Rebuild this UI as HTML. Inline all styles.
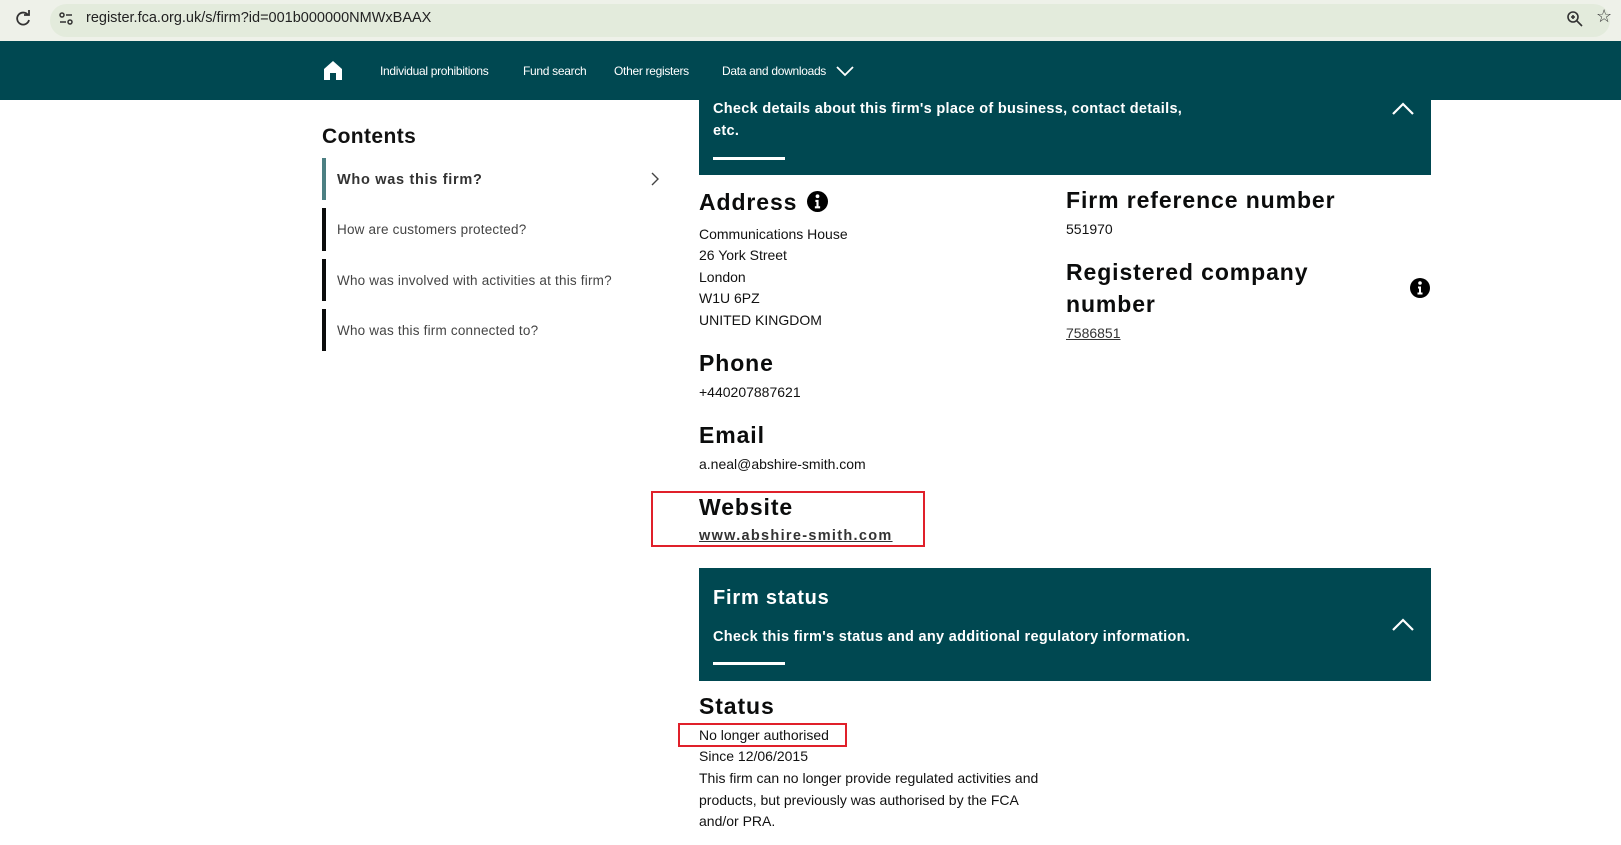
<!DOCTYPE html>
<html><head><meta charset="utf-8"><style>
*{margin:0;padding:0;box-sizing:border-box}
body{width:1621px;height:845px;overflow:hidden;background:#fff;font-family:"Liberation Sans",Arial,sans-serif;color:#111;position:relative}
.a{position:absolute;white-space:nowrap}
.top{position:absolute;left:0;top:0;width:1621px;height:41px;background:#eef1e9}
.url{position:absolute;left:50px;top:4px;width:1560px;height:33px;border-radius:17px;background:#e3ebdc}
.nav{position:absolute;left:0;top:41px;width:1621px;height:59px;background:#004851}
.nav .a{color:#fff;font-size:12px;top:23px;letter-spacing:-0.3px}
.panel{position:absolute;background:#004851;left:699px;width:732px}
.pt{color:#fff;font-weight:bold;font-size:14.5px;letter-spacing:0.3px}
.ul{position:absolute;left:14px;width:72px;height:3px;background:#fff}
h2{position:absolute;font-size:23px;font-weight:bold;white-space:nowrap;color:#0b0c0c;letter-spacing:0.9px}
.t{position:absolute;font-size:14px;white-space:nowrap;color:#111}
.bar{position:absolute;left:322px;width:4px;background:#0b0c0c}
.red{position:absolute;border:2px solid #e0202a}
</style></head><body>
<div class="top"><div class="url"></div>
<svg class="a" style="left:14px;top:10px" width="18" height="18" viewBox="0 0 18 18"><path d="M14 5A6 6 0 1 0 15 10" fill="none" stroke="#333" stroke-width="1.8"/><path d="M10 5h5V0" fill="none" stroke="#333" stroke-width="1.8"/></svg>
<svg class="a" style="left:57px;top:10px" width="18" height="18" viewBox="0 0 18 18"><circle cx="5" cy="5" r="2" fill="none" stroke="#333" stroke-width="1.5"/><path d="M9 5h6M3 12h6" stroke="#333" stroke-width="1.5"/><circle cx="13" cy="12" r="2" fill="none" stroke="#333" stroke-width="1.5"/></svg>
<div class="a" style="left:86px;top:10px;font-size:14.5px;color:#222">register.fca.org.uk/s/firm?id=001b000000NMWxBAAX</div>
<svg class="a" style="left:1566px;top:10px" width="18" height="18" viewBox="0 0 18 18"><circle cx="7" cy="7" r="5" fill="none" stroke="#333" stroke-width="1.6"/><path d="M11 11l5 5M5 7h4M7 5v4" stroke="#333" stroke-width="1.6"/></svg>
<div class="a" style="left:1596px;top:6px;font-size:18px;color:#333">☆</div>
</div>
<div class="nav">
<svg class="a" style="left:323px;top:19px" width="20" height="20" viewBox="0 0 20 20"><path d="M1 9L10 1l9 8v11h-6v-7h-6v7H1z" fill="#fff"/></svg>
<div class="a" style="left:380px">Individual prohibitions</div>
<div class="a" style="left:523px">Fund search</div>
<div class="a" style="left:614px">Other registers</div>
<div class="a" style="left:722px">Data and downloads</div>
<svg class="a" style="left:836px;top:24px" width="18" height="12" viewBox="0 0 18 12"><path d="M1 2l8 8 8-8" fill="none" stroke="#fff" stroke-width="1.8"/></svg>
</div>

<div class="a" style="left:322px;top:125px;font-size:21px;font-weight:bold;letter-spacing:0.4px">Contents</div>
<div class="bar" style="top:158px;height:42px;background:#4c7f82"></div>
<div class="t" style="left:337px;top:172px;font-weight:bold;font-size:14.5px;color:#333;letter-spacing:0.7px">Who was this firm?</div>
<svg class="a" style="left:650px;top:172px" width="10" height="14" viewBox="0 0 10 14"><path d="M2 1l6 6-6 6" fill="none" stroke="#444" stroke-width="1.4"/></svg>
<div class="bar" style="top:208px;height:43px"></div>
<div class="t" style="left:337px;top:222px;color:#444;font-size:13.5px;letter-spacing:0.2px">How are customers protected?</div>
<div class="bar" style="top:259px;height:42px"></div>
<div class="t" style="left:337px;top:273px;color:#444;font-size:13.5px;letter-spacing:0.2px">Who was involved with activities at this firm?</div>
<div class="bar" style="top:309px;height:42px"></div>
<div class="t" style="left:337px;top:323px;color:#444;font-size:13.5px;letter-spacing:0.2px">Who was this firm connected to?</div>

<div class="panel" style="top:100px;height:75px">
<div class="a pt" style="left:14px;top:1px">Check details about this firm's place of business, contact details,</div>
<div class="a pt" style="left:14px;top:23px">etc.</div>
<div class="ul" style="top:57px"></div>
<svg class="a" style="left:692px;top:2px" width="24" height="14" viewBox="0 0 24 14"><path d="M2 12L12 2l10 10" fill="none" stroke="#fff" stroke-width="2.2"/></svg>
</div>

<h2 style="left:699px;top:189px">Address</h2>
<svg class="a" style="left:807px;top:191px" width="21" height="21" viewBox="0 0 20 20"><circle cx="10" cy="10" r="10" fill="#000"/><circle cx="10" cy="5" r="1.8" fill="#fff"/><path d="M8 8.5h3v6h1.5v2h-5v-2H9v-4H8z" fill="#fff"/></svg>
<div class="t" style="left:699px;top:226px">Communications House</div>
<div class="t" style="left:699px;top:247px">26 York Street</div>
<div class="t" style="left:699px;top:269px">London</div>
<div class="t" style="left:699px;top:290px">W1U 6PZ</div>
<div class="t" style="left:699px;top:312px">UNITED KINGDOM</div>
<h2 style="left:699px;top:350px">Phone</h2>
<div class="t" style="left:699px;top:384px">+440207887621</div>
<h2 style="left:699px;top:422px">Email</h2>
<div class="t" style="left:699px;top:456px">a.neal@abshire-smith.com</div>
<h2 style="left:699px;top:494px">Website</h2>
<div class="t" style="left:699px;top:528px;font-weight:bold;text-decoration:underline;color:#333;font-size:14.5px;letter-spacing:1.3px">www.abshire-smith.com</div>
<div class="red" style="left:651px;top:491px;width:274px;height:56px"></div>

<h2 style="left:1066px;top:187px">Firm reference number</h2>
<div class="t" style="left:1066px;top:221px">551970</div>
<h2 style="left:1066px;top:259px">Registered company</h2>
<h2 style="left:1066px;top:291px">number</h2>
<svg class="a" style="left:1410px;top:278px" width="20" height="20" viewBox="0 0 20 20"><circle cx="10" cy="10" r="10" fill="#000"/><circle cx="10" cy="5" r="1.8" fill="#fff"/><path d="M8 8.5h3v6h1.5v2h-5v-2H9v-4H8z" fill="#fff"/></svg>
<div class="t" style="left:1066px;top:325px;text-decoration:underline;color:#333">7586851</div>

<div class="panel" style="top:568px;height:113px">
<div class="a" style="left:14px;top:19px;color:#fff;font-weight:bold;font-size:20px;letter-spacing:0.8px">Firm status</div>
<div class="a pt" style="left:14px;top:61px">Check this firm's status and any additional regulatory information.</div>
<div class="ul" style="top:94px"></div>
<svg class="a" style="left:692px;top:50px" width="24" height="14" viewBox="0 0 24 14"><path d="M2 12L12 2l10 10" fill="none" stroke="#fff" stroke-width="2.2"/></svg>
</div>

<h2 style="left:699px;top:693px">Status</h2>
<div class="red" style="left:678px;top:723px;width:169px;height:24px"></div>
<div class="t" style="left:699px;top:727px">No longer authorised</div>
<div class="t" style="left:699px;top:748px">Since 12/06/2015</div>
<div class="t" style="left:699px;top:770px">This firm can no longer provide regulated activities and</div>
<div class="t" style="left:699px;top:792px">products, but previously was authorised by the FCA</div>
<div class="t" style="left:699px;top:813px">and/or PRA.</div>
</body></html>
